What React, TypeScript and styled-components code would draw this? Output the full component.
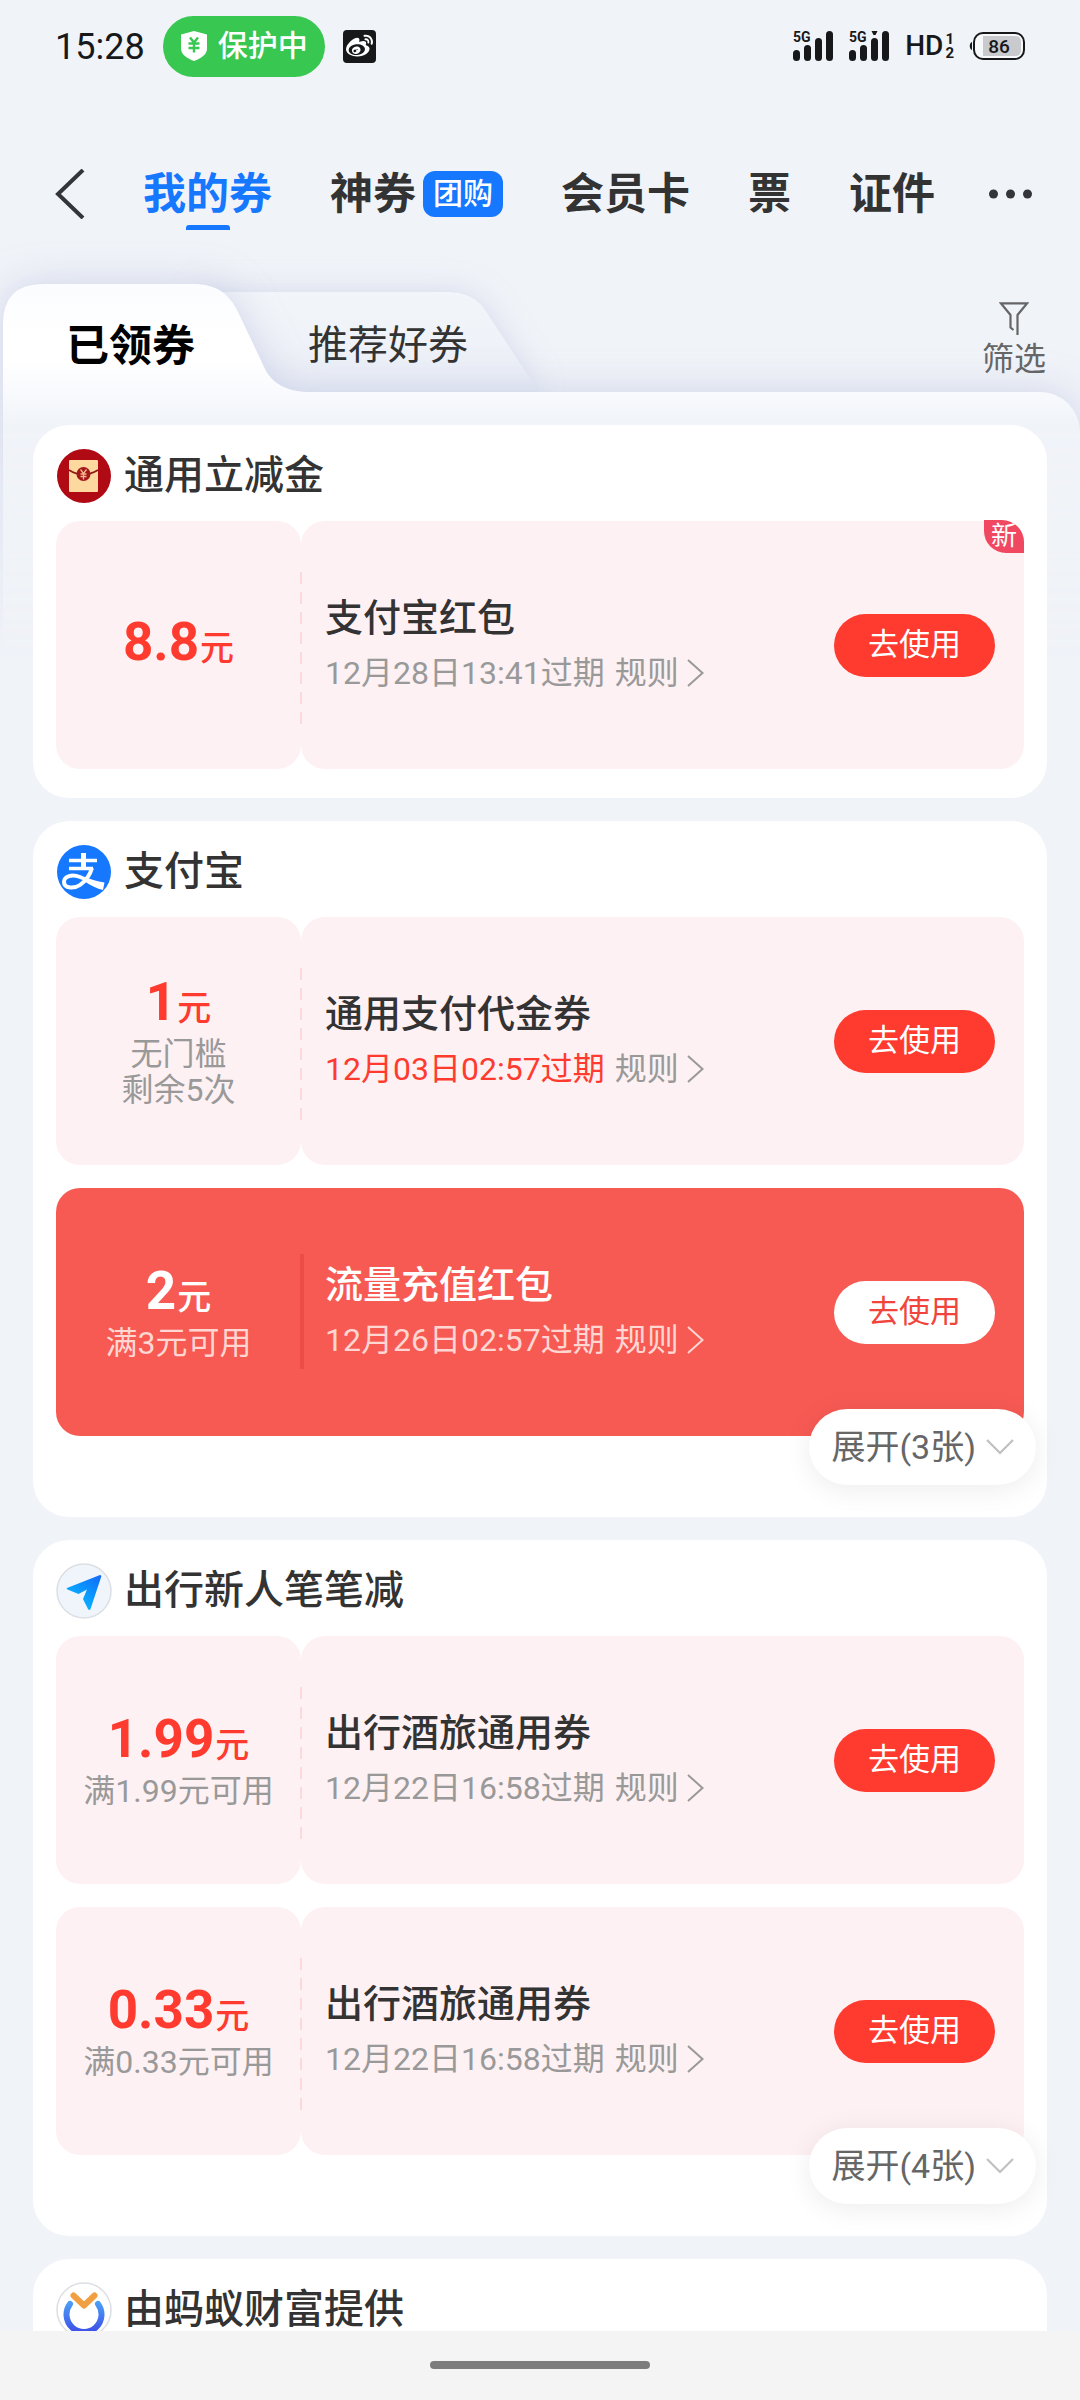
import React from 'react';
import styled, { createGlobalStyle, css } from 'styled-components';
import { FaWeibo } from 'react-icons/fa';

const GlobalStyle = createGlobalStyle`
  *, *::before, *::after { box-sizing: border-box; }
  html, body { margin: 0; padding: 0; background: #f0f3f8; }
  body { font-family: Roboto, "Noto Sans CJK SC", sans-serif; color: #333; }
  button { font: inherit; color: inherit; background: none; border: 0; padding: 0; margin: 0; cursor: pointer; }
  h2, h3, p { margin: 0; font-weight: inherit; }
  svg { display: block; flex: none; }
`;

const Screen = styled.div`
  display: flex;
  flex-direction: column;
  height: 100vh;
  overflow: hidden;
  background: #f0f3f8;
`;

/* ---------- status bar ---------- */

const StatusBar = styled.header`
  display: flex;
  flex: none;
  align-items: center;
  justify-content: space-between;
  height: 92px;
  padding: 0 55px;
  color: #17181a;
`;

const StatusGroup = styled.div<{ $gap: number }>`
  display: flex;
  align-items: center;
  gap: ${(p) => p.$gap}px;
`;

const Clock = styled.time`
  font-size: 36px;
  line-height: 40px;
  padding-top: 2px;
`;

const ProtectPill = styled.div`
  display: flex;
  align-items: center;
  gap: 10px;
  height: 61px;
  padding: 0 17px;
  border-radius: 31px;
  background: #38c751;
  color: #fff;
  font-size: 30px;
  line-height: 58px;
  font-weight: 500;
`;

const WeiboTile = styled.div`
  display: grid;
  place-items: center;
  width: 33px;
  height: 33px;
  border-radius: 4px;
  background: #17181a;
  color: #fff;
  font-size: 27px;
`;

const HdMark = styled.div`
  display: flex;
  align-items: center;
  gap: 2px;
  font-size: 28px;
  font-weight: 500;
  line-height: 30px;
`;

const HdSlots = styled.span`
  display: flex;
  flex-direction: column;
  font-size: 15px;
  font-weight: 700;
  line-height: 14px;
`;

/* ---------- top navigation ---------- */

const TopNav = styled.nav`
  display: flex;
  flex: none;
  align-items: center;
  justify-content: space-between;
  height: 192px;
  padding: 12px 48px 0 55px;
`;

const NavItems = styled.div`
  display: flex;
  align-items: center;
  gap: 58px;
  margin: 0 auto 0 58px;
  font-size: 43px;
  line-height: 60px;
  font-weight: 700;
  white-space: nowrap;
`;

const NavItem = styled.button<{ $active?: boolean }>`
  position: relative;
  display: flex;
  align-items: center;
  gap: 7px;
  ${(p) =>
    p.$active &&
    css`
      color: #1677ff;
      &::after {
        content: '';
        position: absolute;
        left: 50%;
        bottom: -6px;
        width: 44px;
        height: 5px;
        margin-left: -22px;
        border-radius: 3px 3px 0 0;
        background: #1677ff;
      }
    `}
`;

const NavTag = styled.span`
  height: 46px;
  padding: 0 10px;
  border-radius: 12px;
  background: #1677ff;
  color: #fff;
  font-size: 30px;
  line-height: 46px;
  font-weight: 500;
`;

/* ---------- folder tabs ---------- */

const Folder = styled.main`
  position: relative;
  flex: 1;
  min-height: 0;
`;

const FolderFade = styled.div`
  position: absolute;
  inset: -60px 0 auto 0;
  height: 440px;
  padding-top: 60px;
  overflow: hidden;
  pointer-events: none;
  mask-image: linear-gradient(#000 200px, transparent);
`;

const FolderBack = styled.div`
  filter: drop-shadow(0 0 18px rgba(176, 184, 220, 0.5));
`;

const FolderSheet = styled.div`
  height: 320px;
  margin-left: 3px;
  border-radius: 0 40px 0 0;
  background: linear-gradient(#f8fafd, #f0f3f8 34px);
`;

const RearTab = styled.svg`
  position: absolute;
  left: 200px;
  top: 0;
  filter: drop-shadow(0 0 14px rgba(186, 194, 226, 0.5));
`;

const FrontTab = styled.svg`
  margin-left: 3px;
`;

const TabRow = styled.div`
  position: relative;
  display: flex;
  align-items: flex-start;
  height: 108px;
  padding: 0 34px 0 66px;
`;

const Tab = styled.button<{ $active?: boolean }>`
  height: 108px;
  padding-top: 8px;
  margin-right: 113px;
  font-size: ${(p) => (p.$active ? 43 : 40)}px;
  font-weight: ${(p) => (p.$active ? 700 : 400)};
  color: ${(p) => (p.$active ? '#000' : '#333')};
`;

const FilterButton = styled.button`
  display: flex;
  flex-direction: column;
  align-items: center;
  gap: 3px;
  margin-left: auto;
  padding-top: 18px;
  color: #666;
  font-size: 32px;
  line-height: 40px;
`;

/* ---------- coupon groups ---------- */

const List = styled.div`
  position: relative;
  display: flex;
  flex-direction: column;
  gap: 23px;
  height: calc(100% - 108px);
  padding: 33px 33px 0;
  overflow: hidden;
`;

const Group = styled.section<{ $foldable?: boolean }>`
  position: relative;
  flex: none;
  padding: 0 23px ${(p) => (p.$foldable ? 81 : 29)}px;
  border-radius: 36px;
  background: #fff;
`;

const GroupHead = styled.header`
  display: flex;
  align-items: center;
  gap: 12px;
  height: 96px;
  padding-top: 6px;
`;

const GroupTitle = styled.h2`
  font-size: 40px;
  line-height: 40px;
  font-weight: 500;
`;

const Coupons = styled.div`
  display: flex;
  flex-direction: column;
  gap: 23px;
`;

const Coupon = styled.article<{ $solid?: boolean }>`
  position: relative;
  display: flex;
  height: 248px;
  border-radius: 24px;
  color: ${(p) => (p.$solid ? '#fff' : '#333')};
  background: ${(p) => (p.$solid ? '#f75a53' : 'transparent')};
`;

const Stub = styled.div<{ $solid?: boolean }>`
  display: flex;
  flex: none;
  flex-direction: column;
  align-items: center;
  justify-content: center;
  width: 245px;
  border-radius: 24px;
  color: ${(p) => (p.$solid ? '#fff' : '#ff3b30')};
  background: ${(p) => (p.$solid ? 'transparent' : '#fef1f3')};
`;

const Amount = styled.p`
  display: flex;
  align-items: baseline;
  gap: 1px;
  height: 62px;
  font-size: 53px;
  line-height: 56px;
  font-weight: 700;
`;

const Unit = styled.span`
  font-size: 34px;
  font-weight: 500;
`;

const Condition = styled.p<{ $solid?: boolean }>`
  font-size: 32px;
  line-height: 36px;
  color: ${(p) => (p.$solid ? '#ffd6d2' : '#999')};
`;

const Body = styled.div<{ $solid?: boolean }>`
  position: relative;
  display: flex;
  flex: 1;
  align-items: center;
  justify-content: space-between;
  padding: 0 29px 0 24px;
  border-radius: 24px;
  background: ${(p) => (p.$solid ? 'transparent' : '#fef1f3')};

  &::before {
    content: '';
    position: absolute;
    ${(p) =>
      p.$solid
        ? css`
            left: -1px;
            top: 66px;
            width: 4px;
            height: 115px;
            background: #ec4d47;
          `
        : css`
            left: -1px;
            top: 51px;
            width: 2px;
            height: 154px;
            background: repeating-linear-gradient(#fdd8dd 0 12px, transparent 12px 20px);
          `}
  }
`;

const CouponTitle = styled.h3`
  font-size: 38px;
  line-height: 56px;
  font-weight: 500;
`;

const Meta = styled.div<{ $tone: string }>`
  display: flex;
  align-items: center;
  gap: 10px;
  font-size: 32px;
  line-height: 54px;
  color: ${(p) => p.$tone};
`;

const Expiry = styled.span<{ $urgent?: boolean }>`
  ${(p) => p.$urgent && 'color: #ff3b30;'}
`;

const RuleButton = styled.button`
  display: flex;
  align-items: center;
  gap: 8px;
`;

const UseButton = styled.button<{ $solid?: boolean }>`
  width: 161px;
  height: 63px;
  border-radius: 32px;
  font-size: 31px;
  line-height: 60px;
  color: ${(p) => (p.$solid ? '#f0443c' : '#fff')};
  background: ${(p) => (p.$solid ? '#fff' : '#ff3b30')};
`;

const NewBadge = styled.span`
  position: absolute;
  top: -1px;
  right: 0;
  width: 40px;
  height: 33px;
  border-radius: 0 22px 0 22px;
  background: #f04860;
  color: #fff;
  font-size: 26px;
  line-height: 32px;
  text-align: center;
`;

const ExpandButton = styled.button`
  position: absolute;
  right: 11px;
  bottom: 32px;
  display: flex;
  align-items: center;
  gap: 10px;
  height: 76px;
  padding: 0 22px;
  border-radius: 38px;
  background: #fff;
  box-shadow: 0 4px 28px rgba(0, 0, 0, 0.08);
  color: #666;
  font-size: 34px;
  line-height: 70px;
`;

const GestureBar = styled.footer`
  display: flex;
  flex: none;
  justify-content: center;
  height: 69px;
  padding-top: 30px;
  background: #f4f4f4;

  &::before {
    content: '';
    width: 220px;
    height: 8px;
    border-radius: 4px;
    background: #7d7d7d;
  }
`;

/* ---------- drawings ---------- */

const ShieldIcon = () => (
  <svg width="28" height="30" viewBox="0 0 28 30" aria-hidden="true">
    <path d="M14 0 27 3.500v14c0 6-6 10-13 12.500C7 27.500 1 23.500 1 17.500v-14z" fill="#fff" />
    <path d="M10 6.500l4 5 4-5M14 11.500v10M8.500 12.500h11M8.500 17h11" fill="none" stroke="#38c751" strokeWidth="2.400" />
  </svg>
);

const SignalIcon = ({ marker }: { marker?: boolean }) => (
  <svg width="41" height="38" viewBox="0 -4 41 38" aria-hidden="true" fill="#17181a">
    <rect x="0" y="19" width="7" height="11" rx="3.500" />
    <rect x="11" y="14" width="7" height="16" rx="3.500" />
    <rect x="22" y="7" width="7" height="23" rx="3.500" />
    <rect x="33" y="0" width="7" height="30" rx="3.500" />
    {marker && <path d="M22.500 0h6l-2 4h-2z" />}
    <text x="0" y="11" fontFamily="Roboto, sans-serif" fontSize="14" fontWeight="700">5G</text>
  </svg>
);

const BatteryIcon = () => (
  <svg width="56" height="28" viewBox="0 0 56 28" aria-label="86%">
    <path d="M3 10v8c-3-1-3-7 0-8z" fill="#17181a" />
    <rect x="5" y="1" width="50" height="26" rx="9" fill="#f7f8fa" stroke="#17181a" strokeWidth="2" />
    <path d="M14 4h32q6 0 6 6v8q0 6-6 6H14z" fill="#c9cacd" />
    <text x="30" y="21" textAnchor="middle" fontFamily="Roboto, sans-serif" fontSize="19" fontWeight="500" fill="#17181a">86</text>
  </svg>
);

const BackIcon = () => (
  <svg width="30" height="50" viewBox="0 0 30 50" fill="none" stroke="#333539" strokeWidth="4">
    <path d="M28 1 3 25l25 24" />
  </svg>
);

const MoreIcon = () => (
  <svg width="43" height="10" viewBox="0 0 43 10" fill="#333539">
    <circle cx="4.500" cy="5" r="4.500" />
    <circle cx="21.500" cy="5" r="4.500" />
    <circle cx="38.500" cy="5" r="4.500" />
  </svg>
);

const FunnelIcon = () => (
  <svg width="30" height="34" viewBox="0 0 30 34" fill="none" stroke="#666" strokeWidth="2.200">
    <path d="M14.500 28 11.500 25.500V13L1.800 1.300h26.400L18.500 13v20" />
  </svg>
);

const ChevronRight = () => (
  <svg width="17" height="28" viewBox="0 0 17 28" fill="none" stroke="currentColor" strokeWidth="2">
    <path d="M1 1l14.500 13L1 27" />
  </svg>
);

const ChevronDown = () => (
  <svg width="28" height="16" viewBox="0 0 28 16" fill="none" stroke="#c0c0c0" strokeWidth="2.200">
    <path d="M1 1l13 13L27 1" />
  </svg>
);

const EnvelopeLogo = () => (
  <svg width="56" height="56" viewBox="0 0 56 56" aria-hidden="true">
    <circle cx="28" cy="28" r="27" fill="#b00b15" />
    <rect x="13" y="12" width="29" height="32" rx="1" fill="#fdd9a0" />
    <path d="M13 22q14 9 29 0" fill="none" stroke="#8c1a16" strokeWidth="1.800" />
    <circle cx="27.500" cy="26" r="7" fill="#a3161a" />
    <path d="M24.500 21.500l3 4 3-4M27.500 25.500v6M24.500 26h6M24.500 28.500h6" fill="none" stroke="#f2b98a" strokeWidth="1.300" />
  </svg>
);

const AlipayLogo = () => (
  <svg width="56" height="56" viewBox="0 0 56 56" aria-hidden="true">
    <circle cx="28" cy="28" r="27" fill="#1677ff" />
    <g fill="none" stroke="#fff">
      <path d="M13 16.500h28M13 24.500h24" strokeWidth="3.400" />
      <path d="M27.500 9v16" strokeWidth="5" />
      <path d="M36 24c-2 7-6.500 13-12 17-5 3.500-16 4-16-3 0-6 8-8 16-5 5 2 9 4 13 6" strokeWidth="4" />
    </g>
    <path d="M29 33c6 2.500 12 4.500 19.500 5.500l-1.500 7.500c-6-1-12-4.500-19-9z" fill="#fff" />
  </svg>
);

const PlaneLogo = () => (
  <svg width="56" height="56" viewBox="0 0 56 56" aria-hidden="true">
    <defs>
      <linearGradient id="plane" x1="1" y1="0" x2="0.300" y2="1">
        <stop offset="0" stopColor="#1668f5" />
        <stop offset="0.500" stopColor="#0a94ff" />
        <stop offset="1" stopColor="#08bdff" />
      </linearGradient>
    </defs>
    <circle cx="28" cy="28" r="27" fill="#eff5fb" stroke="#dcdfe4" strokeWidth="1.500" />
    <path d="M11 25 44 12q1.500 0 1.300 1.500L34.500 46q-1.200 2-2.500 0L27 36l4-9.500-8.500 4.500-11-4.500q-1.500-.8-.5-1.500z" fill="url(#plane)" />
  </svg>
);

const FortuneLogo = () => (
  <svg width="56" height="56" viewBox="0 0 56 56" aria-hidden="true">
    <defs>
      <linearGradient id="ring" x1="0" y1="0" x2="0" y2="1">
        <stop offset="0" stopColor="#4a9bf5" />
        <stop offset="1" stopColor="#3d4fe8" />
      </linearGradient>
    </defs>
    <circle cx="28" cy="28" r="27" fill="#fff" stroke="#dcdfe4" strokeWidth="1.500" />
    <path d="M14 22a17.500 17.500 0 1 0 28 0" fill="none" stroke="url(#ring)" strokeWidth="6" strokeLinecap="round" />
    <path d="M17.500 13.500 28 23.500l10.500-10" fill="none" stroke="#f0a042" strokeWidth="6" strokeLinecap="round" strokeLinejoin="round" />
  </svg>
);

const RearTabShape = () => (
  <RearTab width="350" height="108" viewBox="0 0 350 108" aria-hidden="true">
    <defs>
      <linearGradient id="rear" x1="0" y1="0" x2="0" y2="1">
        <stop offset="0" stopColor="#f2f5f9" />
        <stop offset="0.500" stopColor="#eff2f8" />
        <stop offset="1" stopColor="#e8ecf5" />
      </linearGradient>
    </defs>
    <path d="M0 8h246c22 0 34 8 43 24l50 76H0z" fill="url(#rear)" />
  </RearTab>
);

const FrontTabShape = () => (
  <FrontTab width="320" height="108" viewBox="0 0 320 108" aria-hidden="true">
    <defs>
      <linearGradient id="front" x1="0" y1="0" x2="0" y2="1">
        <stop offset="0" stopColor="#fbfcff" />
        <stop offset="0.500" stopColor="#fff" />
        <stop offset="0.700" stopColor="#fff" />
        <stop offset="1" stopColor="#f8fafd" />
      </linearGradient>
    </defs>
    <path d="M0 108V40Q0 0 40 0h150c24 0 37 10 46 30l26 55c8 16 24 23 46 23z" fill="url(#front)" />
  </FrontTab>
);

/* ---------- data ---------- */

type CouponData = {
  amount: string;
  conditions?: string[];
  title: string;
  expiry: string;
  urgent?: boolean;
  solid?: boolean;
  fresh?: boolean;
};

type GroupData = {
  name: string;
  Logo: React.FC;
  coupons: CouponData[];
  more?: number;
};

const groups: GroupData[] = [
  {
    name: '通用立减金',
    Logo: EnvelopeLogo,
    coupons: [{ amount: '8.8', title: '支付宝红包', expiry: '12月28日13:41过期', fresh: true }],
  },
  {
    name: '支付宝',
    Logo: AlipayLogo,
    more: 3,
    coupons: [
      { amount: '1', conditions: ['无门槛', '剩余5次'], title: '通用支付代金券', expiry: '12月03日02:57过期', urgent: true },
      { amount: '2', conditions: ['满3元可用'], title: '流量充值红包', expiry: '12月26日02:57过期', solid: true },
    ],
  },
  {
    name: '出行新人笔笔减',
    Logo: PlaneLogo,
    more: 4,
    coupons: [
      { amount: '1.99', conditions: ['满1.99元可用'], title: '出行酒旅通用券', expiry: '12月22日16:58过期' },
      { amount: '0.33', conditions: ['满0.33元可用'], title: '出行酒旅通用券', expiry: '12月22日16:58过期' },
    ],
  },
  { name: '由蚂蚁财富提供', Logo: FortuneLogo, coupons: [] },
];

const CouponCard = ({ coupon }: { coupon: CouponData }) => {
  const { amount, conditions = [], title, expiry, urgent, solid, fresh } = coupon;
  return (
    <Coupon $solid={solid}>
      <Stub $solid={solid}>
        <Amount>
          {amount}
          <Unit>元</Unit>
        </Amount>
        {conditions.map((line) => (
          <Condition key={line} $solid={solid}>{line}</Condition>
        ))}
      </Stub>
      <Body $solid={solid}>
        <div>
          <CouponTitle>{title}</CouponTitle>
          <Meta $tone={solid ? '#ffd6d2' : '#999'}>
            <Expiry $urgent={urgent}>{expiry}</Expiry>
            <RuleButton type="button">
              规则
              <ChevronRight />
            </RuleButton>
          </Meta>
        </div>
        <UseButton type="button" $solid={solid}>去使用</UseButton>
      </Body>
      {fresh && <NewBadge>新</NewBadge>}
    </Coupon>
  );
};

export default function App() {
  return (
    <Screen>
      <GlobalStyle />
      <StatusBar>
        <StatusGroup $gap={18}>
          <Clock>15:28</Clock>
          <ProtectPill>
            <ShieldIcon />
            保护中
          </ProtectPill>
          <WeiboTile>
            <FaWeibo />
          </WeiboTile>
        </StatusGroup>
        <StatusGroup $gap={15}>
          <SignalIcon />
          <SignalIcon marker />
          <HdMark>
            HD
            <HdSlots>
              <span>1</span>
              <span>2</span>
            </HdSlots>
          </HdMark>
          <BatteryIcon />
        </StatusGroup>
      </StatusBar>

      <TopNav>
        <button type="button" aria-label="返回">
          <BackIcon />
        </button>
        <NavItems>
          <NavItem type="button" $active>我的券</NavItem>
          <NavItem type="button">
            神券
            <NavTag>团购</NavTag>
          </NavItem>
          <NavItem type="button">会员卡</NavItem>
          <NavItem type="button">票</NavItem>
          <NavItem type="button">证件</NavItem>
        </NavItems>
        <button type="button" aria-label="更多">
          <MoreIcon />
        </button>
      </TopNav>

      <Folder>
        <RearTabShape />
        <FolderFade>
          <FolderBack>
            <FrontTabShape />
            <FolderSheet />
          </FolderBack>
        </FolderFade>
        <TabRow>
          <Tab type="button" $active>已领券</Tab>
          <Tab type="button">推荐好券</Tab>
          <FilterButton type="button">
            <FunnelIcon />
            筛选
          </FilterButton>
        </TabRow>
        <List>
          {groups.map(({ name, Logo, coupons, more }) => (
            <Group key={name} $foldable={!!more}>
              <GroupHead>
                <Logo />
                <GroupTitle>{name}</GroupTitle>
              </GroupHead>
              <Coupons>
                {coupons.map((coupon) => (
                  <CouponCard key={coupon.amount} coupon={coupon} />
                ))}
              </Coupons>
              {more && (
                <ExpandButton type="button">
                  展开({more}张)
                  <ChevronDown />
                </ExpandButton>
              )}
            </Group>
          ))}
        </List>
      </Folder>

      <GestureBar />
    </Screen>
  );
}
